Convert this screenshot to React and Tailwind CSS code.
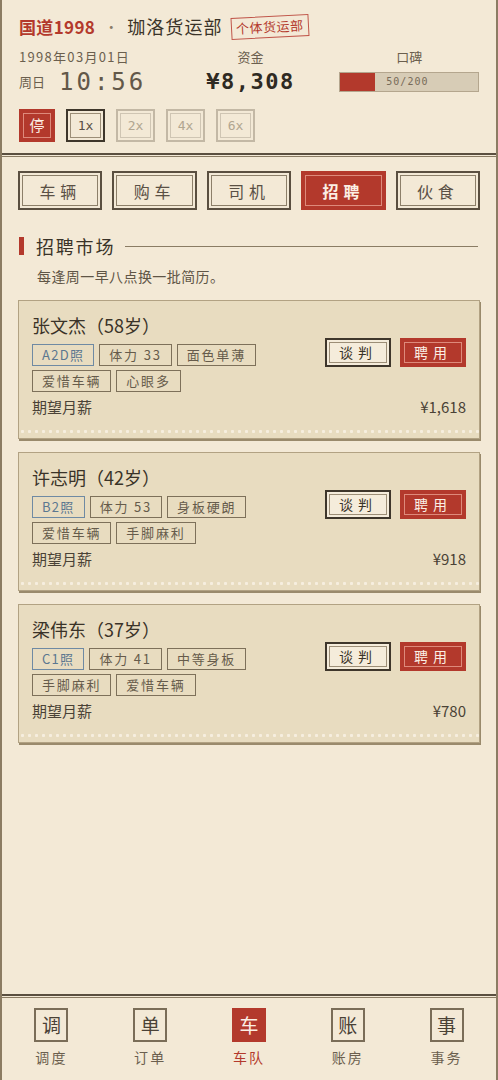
import React from "react";

const cjk = "font-['Noto_Sans_CJK_SC','Noto_Sans',sans-serif]";
const mono = "font-['DejaVu_Sans_Mono','Liberation_Mono',monospace]";

const speeds = [
  { key: "1x", active: true },
  { key: "2x" },
  { key: "4x" },
  { key: "6x" },
];

const tabs = ["车辆", "购车", "司机", "招聘", "伙食"];

const candidates = [
  {
    name: "张文杰（58岁）",
    license: "A2D照",
    tags: ["体力 33", "面色单薄", "爱惜车辆", "心眼多"],
    salary: "¥1,618",
  },
  {
    name: "许志明（42岁）",
    license: "B2照",
    tags: ["体力 53", "身板硬朗", "爱惜车辆", "手脚麻利"],
    salary: "¥918",
  },
  {
    name: "梁伟东（37岁）",
    license: "C1照",
    tags: ["体力 41", "中等身板", "手脚麻利", "爱惜车辆"],
    salary: "¥780",
  },
];

const navItems = [
  { icon: "调", label: "调度" },
  { icon: "单", label: "订单" },
  { icon: "车", label: "车队", active: true },
  { icon: "账", label: "账房" },
  { icon: "事", label: "事务" },
];

const DoubleRule = () => (
  <div>
    <div className="h-[2px] bg-[#5a4f40]" />
    <div className="h-[1px]" />
    <div className="h-[1px] bg-[#8a7c64]" />
  </div>
);

const Candidate = ({ c }) => (
  <div className="relative border border-[#b2a283] bg-[#e8dcc0] shadow-[1px_2px_0_#9a8a6c]">
    <div className="flex px-[13px] pt-[12px]">
      <div className="min-w-0 flex-1">
        <div className="text-[18px] leading-[24px] text-[#3a3328]">{c.name}</div>
        <div className="mt-[7px] flex max-w-[275px] flex-wrap gap-x-[5px] gap-y-[4px]">
          <span className="flex h-[22px] items-center border-[1.5px] border-[#6f8aa3] px-[9px] text-[13px] tracking-[0.1em] text-[#5b7790]">
            {c.license}
          </span>
          {c.tags.map((t) => (
            <span
              key={t}
              className="flex h-[22px] items-center border-[1.5px] border-[#7d705a] px-[9px] text-[13px] tracking-[0.14em] text-[#665b4b]"
            >
              {t}
            </span>
          ))}
        </div>
      </div>
      <div className="flex gap-[9px] pt-[25px]">
        <button className="h-[29px] w-[66px] border-2 border-[#3e362b] bg-[#f5ecdb] p-[2px]">
          <span className="flex h-full items-center justify-center border border-[#9c8e77] text-[14px] tracking-[0.35em] text-[#3a3328]">
            谈判
          </span>
        </button>
        <button className="h-[29px] w-[66px] border-2 border-[#b3392c] bg-[#b3392c] p-[2px]">
          <span className="flex h-full items-center justify-center border border-[#de8a7b] text-[14px] tracking-[0.35em] text-[#fbeee4]">
            聘用
          </span>
        </button>
      </div>
    </div>
    <div className="mt-[5px] flex items-center justify-between px-[13px] text-[15px] leading-[20px] text-[#4a4236]">
      <span>期望月薪</span>
      <span>{c.salary}</span>
    </div>
    <div className="mb-[4px] mt-[12px] h-[5px] bg-[radial-gradient(circle,#f6eedf_1.3px,transparent_1.8px)] bg-[length:7px_5px]" />
  </div>
);

export default function App() {
  return (
    <div className={`${cjk} flex min-h-[1080px] flex-col border-x-2 border-[#8b7c63] bg-[#f3e9d6] text-[#3a3328]`}>
      <header className="px-[17px] pt-[13px]">
        <div className="flex items-center">
          <span className="text-[17px] font-bold tracking-[0.02em] text-[#b3392c]">国道1998</span>
          <span className="mx-[9px] text-[14px] text-[#8a7d68]">·</span>
          <span className="text-[18px] tracking-[0.06em] text-[#3a3328]">珈洛货运部</span>
          <span className="ml-[8px] -rotate-[3deg] border-[1.5px] border-[#c0564a] px-[4px] text-[13px] leading-[20px] tracking-[0.04em] text-[#b3392c]">
            个体货运部
          </span>
        </div>
        <div className="mt-[8px] flex">
          <div className="w-[182px]">
            <div className="text-[13px] leading-[18px] tracking-[1.3px] text-[#6b5f4e]">1998年03月01日</div>
            <div className="mt-[2px] flex items-center">
              <span className="text-[13px] text-[#6b5f4e]">周日</span>
              <span className={`${mono} ml-[14px] text-[24px] leading-[28px] tracking-[3px] text-[#625849]`}>10:56</span>
            </div>
          </div>
          <div className="w-[100px] text-center">
            <div className="text-[13px] leading-[18px] text-[#6b5f4e]">资金</div>
            <div className={`${mono} mt-[2px] text-[22px] font-bold leading-[28px] tracking-[1.5px] text-[#2f2a22]`}>¥8,308</div>
          </div>
          <div className="ml-[39px] w-[140px]">
            <div className="text-center text-[13px] leading-[18px] text-[#6b5f4e]">口碑</div>
            <div className="relative mt-[6px] h-[20px] border border-[#b4a68e] bg-[#d7ccb6]">
              <div className="h-full w-[25%] bg-[#b3392c]" />
              <span className={`${mono} absolute left-[46px] top-0 text-[10px] leading-[18px] tracking-[1px] text-[#776b59]`}>50/200</span>
            </div>
          </div>
        </div>
        <div className="mt-[13px] flex gap-[11px] pb-[11px]">
          <button className="h-[33px] w-[36px] border-2 border-[#b3392c] bg-[#b3392c] p-[2px]">
            <span className="flex h-full items-center justify-center border border-[#de8a7b] text-[15px] text-[#fbeee4]">停</span>
          </button>
          {speeds.map((s) => (
            <button
              key={s.key}
              className={
                "h-[33px] w-[39px] p-[2px] " +
                (s.active ? "border-2 border-[#3e362b]" : "border-2 border-[#c3b8a5]")
              }
            >
              <span
                className={
                  `${mono} flex h-full items-center justify-center border text-[13px] ` +
                  (s.active ? "border-[#9c8e77] text-[#5a5045]" : "border-[#cfc5b3] text-[#b1a690]")
                }
              >
                {s.key}
              </span>
            </button>
          ))}
        </div>
      </header>
      <DoubleRule />

      <main className="flex-1 px-[15px] pt-[14px]">
        <div className="grid grid-cols-5 gap-[10px] px-[1px]">
          {tabs.map((t) =>
            t === "招聘" ? (
              <button key={t} className="h-[39px] border-2 border-[#b3392c] bg-[#b3392c] p-[2px]">
                <span className="flex h-full items-center justify-center border border-[#de8a7b] text-[16px] font-bold tracking-[0.3em] text-[#fbeee4]">
                  {t}
                </span>
              </button>
            ) : (
              <button key={t} className="h-[39px] border-2 border-[#5a4f40] p-[2px]">
                <span className="flex h-full items-center justify-center border border-[#8c7f69] text-[16px] tracking-[0.3em] text-[#5a5045]">
                  {t}
                </span>
              </button>
            )
          )}
        </div>

        <div className="mt-[25px] flex items-center pl-[2px]">
          <span className="h-[18px] w-[5px] bg-[#b3392c]" />
          <span className="ml-[12px] text-[18px] leading-[22px] tracking-[0.1em] text-[#3a3328]">招聘市场</span>
          <span className="ml-[10px] mr-[3px] h-[1px] flex-1 bg-[#8a7c64]" />
        </div>
        <p className="mt-[9px] pl-[20px] text-[14px] leading-[20px] tracking-[0.03em] text-[#5f5546]">每逢周一早八点换一批简历。</p>

        <div className="mt-[14px] flex flex-col gap-[13px] px-[1px]">
          {candidates.map((c) => (
            <Candidate key={c.name} c={c} />
          ))}
        </div>
      </main>

      <DoubleRule />
      <nav className="grid grid-cols-5 pb-[13px] pt-[10px]">
        {navItems.map((n) => (
          <div key={n.label} className="flex flex-col items-center">
            <span
              className={
                "flex h-[34px] w-[34px] items-center justify-center text-[19px] " +
                (n.active ? "bg-[#b3392c] text-[#fbeee4]" : "border-2 border-[#7a6d58] text-[#4a4236]")
              }
            >
              {n.icon}
            </span>
            <span
              className={
                "mt-[5px] text-[14px] leading-[20px] tracking-[0.15em] " + (n.active ? "text-[#b3392c]" : "text-[#6b5f4e]")
              }
            >
              {n.label}
            </span>
          </div>
        ))}
      </nav>
    </div>
  );
}
